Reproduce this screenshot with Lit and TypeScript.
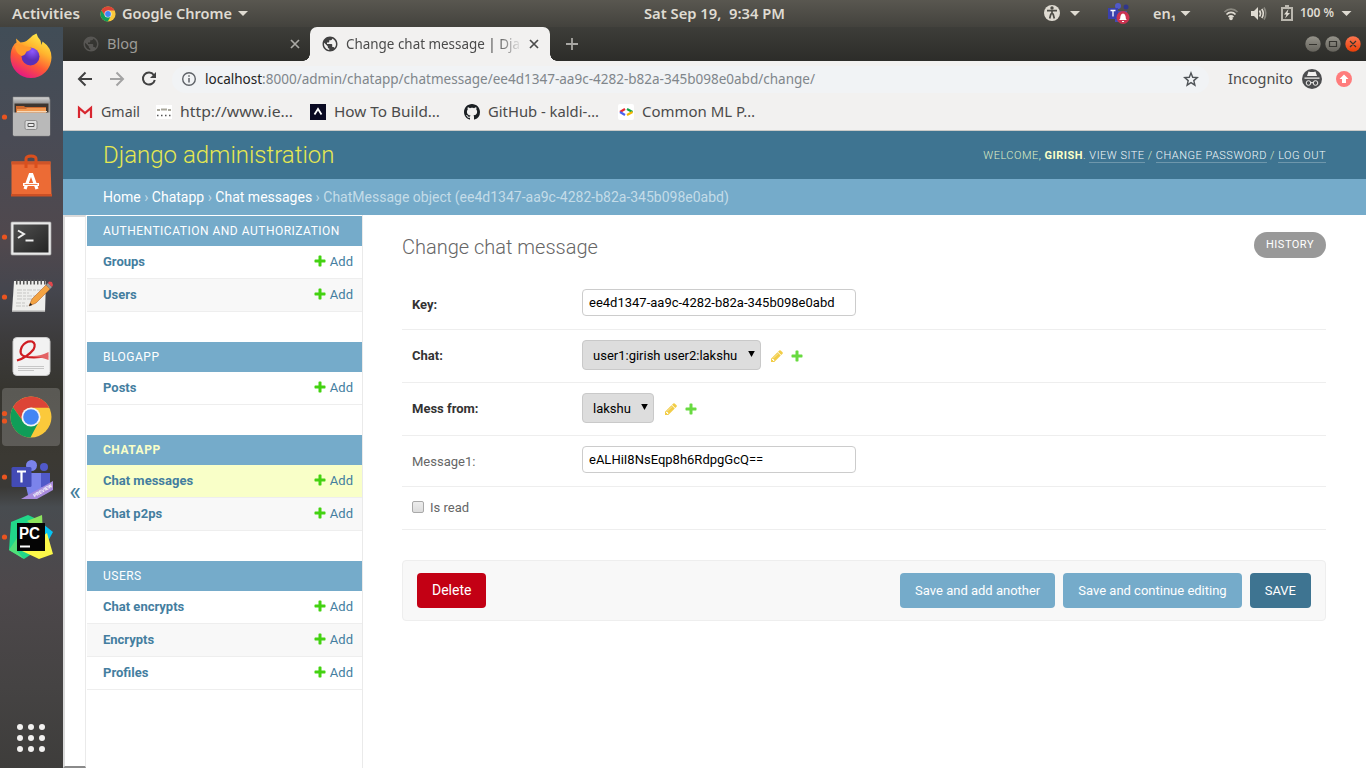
import { LitElement, html, svg, css } from "lit";
import { customElement } from "lit/decorators.js";

const GLOBE =
  "M12 2C6.48 2 2 6.48 2 12s4.48 10 10 10 10-4.48 10-10S17.52 2 12 2zm-1 17.93c-3.95-.49-7-3.85-7-7.93 0-.62.08-1.21.21-1.79L9 15v1c0 1.1.9 2 2 2v1.93zm6.9-2.54c-.26-.81-1-1.39-1.9-1.39h-1v-3c0-.55-.45-1-1-1H8v-2h2c.55 0 1-.45 1-1V7h2c1.1 0 2-.9 2-2v-.41c2.93 1.19 5 4.06 5 7.41 0 2.08-.8 3.97-2.1 5.39z";
const PLUS =
  "M1600 796v192q0 40-28 68t-68 28h-416v416q0 40-28 68t-68 28h-192q-40 0-68-28t-28-68v-416h-416q-40 0-68-28t-28-68v-192q0-40 28-68t68-28h416v-416q0-40 28-68t68-28h192q40 0 68 28t28 68v416h416q40 0 68 28t28 68z";
const PENCIL =
  "M491 1536l91-91-235-235-91 91v107h128v128h107zm523-928q0-22-22-22-10 0-17 7l-542 542q-7 7-7 17 0 22 22 22 10 0 17-7l542-542q7-7 7-17zm-54-192l416 416-832 832h-416v-416zm683 96q0 53-37 90l-166 166-416-416 166-165q36-38 90-38 53 0 91 38l235 234q37 39 37 91z";
const OCTOCAT =
  "M8 0C3.58 0 0 3.58 0 8c0 3.54 2.29 6.53 5.47 7.59.4.07.55-.17.55-.38 0-.19-.01-.82-.01-1.49-2.01.37-2.53-.49-2.69-.94-.09-.23-.48-.94-.82-1.13-.28-.15-.68-.52-.01-.53.63-.01 1.08.58 1.23.82.72 1.21 1.87.87 2.33.66.07-.52.28-.87.51-1.07-1.78-.2-3.64-.89-3.64-3.95 0-.87.31-1.59.82-2.15-.08-.2-.36-1.02.08-2.12 0 0 .67-.21 2.2.82.64-.18 1.32-.27 2-.27s1.36.09 2 .27c1.53-1.04 2.2-.82 2.2-.82.44 1.1.16 1.92.08 2.12.51.56.82 1.27.82 2.15 0 3.07-1.87 3.75-3.65 3.95.29.25.54.73.54 1.48 0 1.07-.01 1.93-.01 2.2 0 .21.15.46.55.38A8.01 8.01 0 0016 8c0-4.42-3.58-8-8-8z";

/** One line of text spread over an exact width. */
const label = (text: string, width: number, cls = "") => html`
  <svg class="label ${cls}" width=${width} height="20">
    <text x="0" y="15" textLength=${width} lengthAdjust="spacingAndGlyphs">${text}</text>
  </svg>`;

const labelStyles = css`
  svg { display: block; flex: none; }
  .label { overflow: visible; font-family: "Noto Sans", "Open Sans", sans-serif; font-size: 14px; fill: #4b4b4b; }
  .label text { white-space: pre; }
`;

const chromeMark = (cx: number, cy: number, r: number) => svg`
  <g transform="translate(${cx} ${cy}) scale(${r / 20})">
    <circle r="20" fill="#fbc93b"/>
    <path d="M-17.6-9.5A20 20 0 0 1 17.9-9L0-9-7.8 4.5z" fill="#dc4437"/>
    <path d="M-17.6-9.5A20 20 0 0 0-.5 20L7.8 4.5-7.8 4.5z" fill="#109d58"/>
    <circle r="9.3" fill="#f4f4f4"/><circle r="7.6" fill="#4285f4"/>
  </g>`;

@customElement("top-bar")
class TopBar extends LitElement {
  static styles = [labelStyles, css`
    :host { display: flex; align-items: center; height: 27px; background: linear-gradient(#595750, #43423d); }
    .label { font-weight: 600; font-size: 13.5px; fill: #dfdbd2; }
    .small { font-size: 12px; }
    .start { display: flex; flex: none; align-items: center; width: 644px; padding-left: 12px; box-sizing: border-box; }
    .app { margin: 0 6px 0 20px; }
    .caret { margin-left: 6px; }
    .tray { margin-left: 258px; }
  `];
  render() {
    const caret = svg`<path d="M0 0h10l-5 5z" fill="#dfdbd2"/>`;
    return html`
      <div class="start">
        ${label("Activities", 68)}
        <svg class="app" width="16" height="16">${chromeMark(8, 8, 7.6)}</svg>
        ${label("Google Chrome", 110)}
        <svg class="caret" width="10" height="6">${caret}</svg>
      </div>
      ${label("Sat Sep 19,  9:34 PM", 141)}
      <svg class="tray" width="110" height="27">
        <circle cx="9" cy="13" r="8" fill="#dfdbd2"/>
        <circle cx="9" cy="8" r="1.700" fill="#4d4c46"/>
        <path d="M4 10.700h10M9 10.500v4M8 13.500L6.700 18.500M10 13.500l1.300 5" stroke="#4d4c46" stroke-width="1.700" fill="none"/>
        <g transform="translate(27 11)">${caret}</g>
        <circle cx="75" cy="6" r="3" fill="#5059c9"/><circle cx="83" cy="7" r="2.500" fill="#30368c"/>
        <path d="M72 11h12v11h-12z" fill="#454bb0"/>
        <path d="M65 8h10v11h-10z" fill="#3a40ad"/>
        <path d="M67.500 10.500h5M70 10.500v6" stroke="#fff" stroke-width="1.300"/>
        <circle cx="80" cy="17.500" r="6.500" fill="#cc3350"/>
        <path d="M76 20q1.500-1 1.500-4 .5-2.500 2.500-2.500t2.500 2.500q0 3 1.500 4zM79 21h2v1h-2z" fill="#fff"/>
      </svg>
      ${label("en₁", 23)}
      <svg width="190" height="27" viewBox="1176 0 190 27">
        <g transform="translate(1180.500 11)">${caret}</g>
        <g fill="none" stroke="#dfdbd2" stroke-width="1.700">
          <path d="M1224.500 12a9 9 0 0 1 13 0" opacity=".4"/><path d="M1226.500 14.500a6 6 0 0 1 9 0M1228.500 17a4 4 0 0 1 5 0"/>
          <path d="M1259.500 10.500q2 3 0 6M1261.800 9q3 4.500 0 9"/><path d="M1264 7.500q3.500 6 0 12" opacity=".4"/>
          <path d="M1282 8h10v12h-10zM1285 6h4" opacity=".75" stroke-width="2"/>
        </g>
        <circle cx="1231" cy="18.500" r="1.800" fill="#dfdbd2"/>
        <path d="M1251 11h3l4-4v13l-4-4h-3zM1288.500 9l-4.500 5.500h2.500l-1.500 4 5-5.500h-2.500z" fill="#dfdbd2"/>
        <text x="1300" y="17" class="label small" textLength="34">100 %</text>
        <g transform="translate(1341.500 11)">${caret}</g>
      </svg>`;
  }
}

@customElement("app-dock")
class AppDock extends LitElement {
  static styles = [labelStyles, css`
    :host {
      display: flex; flex-direction: column; width: 63px; flex: none;
      background: linear-gradient(#414d57 0, #494b55 110px, #50484d 215px, #45464e 262px, #3d3c3d 310px, #36352f 365px, #3b3933 430px, #3a3936 460px, #484c50 480px, #4d484b 560px, #454343 660px, #3e3d3b 741px);
    }
    .spacer { flex: 1; }
    .mono { font-family: "Liberation Sans", sans-serif; font-weight: 700; }
  `];
  tile(content: unknown, dots = 0) {
    return html`<svg width="63" height="60">
      ${dots === 1 ? svg`<circle cx="4.500" cy="30" r="2.600" fill="#e95420"/>` : ""}
      ${content}
      ${dots === 2 ? svg`<circle cx="4.500" cy="26.500" r="2.600" fill="#e95420"/><circle cx="4.500" cy="34" r="2.600" fill="#e95420"/>` : ""}
    </svg>`;
  }
  render() {
    return html`
      ${this.tile(svg`
        <defs>
          <linearGradient id="fx" x1=".8" y1="0" x2=".3" y2="1"><stop offset="0" stop-color="#fff44f"/><stop offset=".35" stop-color="#ffb52e"/><stop offset=".65" stop-color="#ff5a35"/><stop offset="1" stop-color="#e31587"/></linearGradient>
          <radialGradient id="fp" cx=".6" cy=".2"><stop offset="0" stop-color="#9059ff"/><stop offset="1" stop-color="#5b2fb8"/></radialGradient>
        </defs>
        <path d="M10.500 30q0-8 4-13l2-1.500-.5-4 4.500 4 3.500-.5q3-1 6-4 2-3 6.500-4.500 1 4 4 7l1 4.500 1-3.500q9 6 9 16a20.500 20.500 0 0 1-41 0z" fill="url(#fx)"/>
        <circle cx="30.500" cy="29.500" r="9" fill="url(#fp)"/>
        <path d="M15 19q6-3 10 .5 4-.5 6.500 1.500-1 2.500-5 3.500-1.500 4-5 4.500-6-3-6.500-10z" fill="#ff9a2b"/>`)}
      ${this.tile(svg`
        <defs><linearGradient id="cab" x2="0" y2="1"><stop offset="0" stop-color="#d6d6d6"/><stop offset=".15" stop-color="#9b9b9b"/><stop offset="1" stop-color="#c3c3c3"/></linearGradient></defs>
        <path d="M13 10h36l1 3v35q0 1-1.500 1h-34q-1.500 0-1.500-1V13z" fill="url(#cab)" stroke="#858585" stroke-width=".6"/>
        <path d="M14.500 16.500h34V27h-34z" fill="#3e3630"/>
        <path d="M16 19h8l1 1h21v6H16z" fill="#cf6b30"/><path d="M17 22h9l1-1h19v5H17z" fill="#f19a52"/><path d="M17 24.500h30" stroke="#f7d7b5"/>
        <path d="M13 25.500h37V48H13z" fill="#b9b9b9"/>
        <rect x="25" y="33.500" width="12" height="9" rx="1.500" fill="#ddd" stroke="#8b8b8b"/><path d="M28 36.500h6v3h-6z" fill="#eee" stroke="#555"/>`, 1)}
      ${this.tile(svg`
        <path d="M11.500 14.500h39L51.500 49h-40z" fill="#ec6b35"/><path d="M11.500 14.500h39v3h-39z" fill="#cf5428"/><path d="M11 47h41v2.500H11z" fill="#cb5025"/>
        <path d="M26 21v-9q0-3 5-3t5 3v9" fill="none" stroke="#d94f1d" stroke-width="3"/>
        <path d="M25 42l5.200-14.500h1.600L37 42" fill="none" stroke="#fff" stroke-width="3.200"/><path d="M23 37.500h16" stroke="#fff" stroke-width="3"/><path d="M24.500 37.500h13" stroke="#f0824f"/>`)}
      ${this.tile(svg`
        <defs><linearGradient id="tm" x2="1" y2="1"><stop offset="0" stop-color="#505050"/><stop offset="1" stop-color="#242424"/></linearGradient></defs>
        <rect x="11" y="15" width="40" height="33" rx="1" fill="#e9e9e9" stroke="#aaa" stroke-width=".7"/><path d="M13.500 17.500h35v28h-35z" fill="url(#tm)"/>
        <path d="M18 23.500l6 3.500-6 4" fill="none" stroke="#eee" stroke-width="2"/><path d="M25.500 33.500h8" stroke="#eee" stroke-width="2"/>`, 1)}
      ${this.tile(svg`
        <path d="M14 14h32l-1 31H12z" fill="#eeeeec"/><path d="M12 43.500h33v1.500H12z" fill="#aaa"/>
        <path d="M16 15h30" stroke="#555" stroke-width="5" stroke-dasharray="1.500 2"/>
        <path d="M17 23h25M17 26h12M17 29h22M17 32h20M16 36h10M16 39h12" stroke="#c5c5c3" stroke-dasharray="5 1 3 1"/>
        <path d="M29 39l3-7 14-14 4 4-14 14z" fill="#f3a342" stroke="#b4672c" stroke-width=".6"/><path d="M29 39l1.300-3 2 2z" fill="#222"/><path d="M46 18l2-2 4 4-2 2z" fill="#999"/><path d="M48 16l1-1.500 3 .5 1 3-1 2z" fill="#e2464b"/>`, 1)}
      ${this.tile(svg`
        <rect x="13" y="10.500" width="37" height="38" rx="4" fill="#f2f2f2" stroke="#c9c9c9"/>
        <path d="M17 33.500q10-3 16.500-11 3-6-1.500-8-6-1-10 5-4 8 3 10 9 2 23-.5" fill="none" stroke="#cf1d22" stroke-width="2.200"/>
        <path d="M33 29q8 0 15.500-4v8q-7-3-15.500-3z" fill="#e36365"/><path d="M18 39.500h26M18 41.500h26M18 43.500h16" stroke="#bbb" stroke-width=".8"/>`)}
      ${this.tile(svg`<rect x="2" y="1" width="58" height="58" rx="4" fill="#fff" opacity=".18"/>${chromeMark(31, 30, 20.5)}`, 2)}
      ${this.tile(svg`
        <circle cx="31.500" cy="18.500" r="5.500" fill="#7b83eb"/><circle cx="44" cy="20" r="4" fill="#5059c9"/>
        <path d="M23 26h27v13q0 8-8 9H28z" fill="#7b83eb"/><path d="M41 26h9v14h-9z" fill="#5059c9"/>
        <rect x="11.500" y="20" width="20" height="20" rx="1.500" fill="#434bb5"/><path d="M17 24.500h9M21.500 24.500v11" stroke="#fff" stroke-width="2.200"/>
        <path d="M21 52l32-18v9l-16 9z" fill="#a78bdc"/><text x="0" y="0" transform="translate(34.500 50.500) rotate(-31)" fill="#fff" font-size="5" class="mono" textLength="21" lengthAdjust="spacingAndGlyphs">PREVIEW</text>`, 1)}
      ${this.tile(svg`
        <path d="M9 43l2-28 17-7 13 6v27l-17 11z" fill="#21d789"/><path d="M27 14l15-6 1 18z" fill="#8de45d"/><path d="M43 17l10 8-6 11z" fill="#07c3f2"/>
        <path d="M22 44l25-18 6 21-14 5z" fill="#fcf84a"/><path d="M9 43l8-12v13l7 8z" fill="#51e078"/>
        <path d="M17 16h28v28H17z" fill="#050505"/><text x="19" y="31.500" class="mono" font-size="16" fill="#fff" textLength="21" lengthAdjust="spacingAndGlyphs">PC</text><path d="M20 39.500h10" stroke="#fff" stroke-width="2"/>`, 1)}
      <div class="spacer"></div>
      <svg width="63" height="60">
        ${[0, 1, 2].map((r) => [0, 1, 2].map((c) => svg`<circle cx=${20 + c * 11} cy=${19 + r * 11} r="3" fill="#f2f1f0"/>`))}
      </svg>`;
  }
}

@customElement("browser-chrome")
class BrowserChrome extends LitElement {
  static styles = [labelStyles, css`
    :host { display: block; background: #f2f1f0; height: 103px; border-bottom: 1px solid #c9cac8; }
    .tabs { display: flex; align-items: center; height: 34px; background: linear-gradient(#3d3d39, #2c2c29); }
    .tab { display: flex; align-items: center; width: 247px; height: 34px; padding-left: 20px; box-sizing: border-box; gap: 8px; }
    .tab .label { fill: #9d9c98; }
    .tab.on { position: relative; width: 240px; padding-left: 12px; background: #f2f1f0; border-radius: 7px 7px 0 0; }
    .tab.on::before, .tab.on::after { content: ""; position: absolute; bottom: 0; width: 7px; height: 7px; }
    .tab.on::before { left: -7px; background: radial-gradient(circle at 0 0, transparent 6.5px, #f2f1f0 7px); }
    .tab.on::after { right: -7px; background: radial-gradient(circle at 100% 0, transparent 6.5px, #f2f1f0 7px); }
    .tab.on .label { fill: #4b4b4b; }
    .title { width: 174px; -webkit-mask-image: linear-gradient(90deg, #000 150px, transparent 176px); }
    .grow { flex: 1; }
    .gap { width: 135px; }
    .tools { display: flex; align-items: center; height: 36px; }
    .omni { display: flex; align-items: center; gap: 8px; width: 1038px; height: 27px; margin-left: 8px; padding-left: 9px; box-sizing: border-box; border-radius: 14px; background: #f1f3f5; }
    .url .host { fill: #222; }
    .url { fill: #80868b; }
    .inc { margin-left: 19px; }
    .marks { display: flex; align-items: center; height: 30px; padding-left: 14px; }
    .mark { display: flex; align-items: center; gap: 8px; }
  `];
  render() {
    const x = (c: string) => html`<svg width="12" height="12"><path d="M2 2l8 8M10 2l-8 8" stroke=${c} stroke-width="1.700"/></svg>`;
    const globe = (c: string) => html`<svg width="16" height="16" viewBox="1.300 1.300 21.400 21.400"><path d=${GLOBE} fill=${c}/></svg>`;
    const mark = (icon: unknown, text: string, width: number, slot: number) => html`
      <div class="mark" style="width:${slot}px"><svg width="16" height="16">${icon}</svg>${label(text, width)}</div>`;
    return html`
      <div class="tabs">
        <div class="tab">${globe("#575653")}${label("Blog", 31)}<div class="gap"></div>${x("#aaa9a5")}</div>
        <div class="tab on">${globe("#414141")}<div class="title">${label("Change chat message | Dja", 174)}</div>${x("#4b4b4b")}</div>
        <svg width="44" height="34"><path d="M16 17h12M22 11v12" stroke="#a9a8a4" stroke-width="1.800"/></svg>
        <div class="grow"></div>
        <svg width="62" height="34">
          <defs><linearGradient id="gb" x2="0" y2="1"><stop offset="0" stop-color="#95938a"/><stop offset="1" stop-color="#66645d"/></linearGradient>
          <linearGradient id="rb" x2="0" y2="1"><stop offset="0" stop-color="#fc7650"/><stop offset="1" stop-color="#ea3f08"/></linearGradient></defs>
          <circle cx="9" cy="17" r="7.700" fill="url(#gb)"/><circle cx="29" cy="17" r="7.700" fill="url(#gb)"/><circle cx="49" cy="17" r="7.700" fill="url(#rb)"/>
          <path d="M5 17.500h8M25.500 14.500h7v5h-7zM46 14l6 6M52 14l-6 6" fill="none" stroke="#35342f" stroke-width="1.200"/>
        </svg>
      </div>
      <div class="tools">
        <svg width="101" height="36" fill="none" stroke="#414141" stroke-width="2">
          <path d="M29 18H16.500M22.500 11.500L16 18l6.500 6.500"/>
          <path d="M47 18h12.500M53.500 11.500L60 18l-6.500 6.500" stroke="#a3a3a3"/>
          <path d="M90.800 14a6 6 0 1 0 1 5"/><path d="M93 11v6h-6z" fill="#414141" stroke="none"/>
        </svg>
        <div class="omni">
          <svg width="16" height="16"><circle cx="8" cy="8" r="6.300" fill="none" stroke="#5f6368" stroke-width="1.400"/><path d="M8 7v4.500M8 4.300v1.500" stroke="#5f6368" stroke-width="1.500"/></svg>
          <svg class="label url" width="970" height="20"><text x="0" y="14.500" textLength="610" lengthAdjust="spacingAndGlyphs"><tspan class="host">localhost</tspan>:8000/admin/chatapp/chatmessage/ee4d1347-aa9c-4282-b82a-345b098e0abd/change/</text></svg>
          <svg width="16" height="16"><path d="M8 2l1.700 4.300 4.600.3-3.500 3 1.100 4.500L8 11.600l-3.900 2.500 1.100-4.500-3.500-3 4.600-.3z" fill="none" stroke="#4f5357" stroke-width="1.400"/></svg>
        </div>
        <div class="inc">${label("Incognito", 65)}</div>
        <svg width="73" height="36">
          <circle cx="19" cy="18" r="10" fill="#4c4d4f"/>
          <path d="M11.500 16.500h15v1.200h-15zM14 15l1.500-4.500q3.500 1 7 0L24 15z" fill="#f2f1f0"/>
          <path d="M17.500 22q1.500-1 3 0" stroke="#f2f1f0" fill="none"/><circle cx="15.500" cy="22" r="2.300" fill="none" stroke="#f2f1f0"/><circle cx="22.500" cy="22" r="2.300" fill="none" stroke="#f2f1f0"/>
          <circle cx="51" cy="18" r="8" fill="#ff7c7c"/><path d="M51 13.500l4.500 4.500h-2.500v4h-4v-4h-2.500z" fill="#fff"/>
        </svg>
      </div>
      <div class="marks">
        ${mark(svg`<path d="M1 3h14v11H1z" fill="#f3eeee"/><path d="M2 14V3.800l6 5.200 6-5.200V14" fill="none" stroke="#d8262f" stroke-width="2.200"/>`, "Gmail", 39, 79)}
        ${mark(svg`<path d="M0 1h16v14H0z" fill="#fff"/><path d="M1 6h3M5 5.500h6M12 6h3" stroke="#a9a79b" stroke-width="2"/><path d="M1 11.500h15" stroke="#555" stroke-width="1.500" stroke-dasharray="1.500 2.500"/>`, "http://www.ie…", 113, 154)}
        ${mark(svg`<path d="M0 0h16v16H0z" fill="#0a0a23"/><path d="M4.500 10.500L8 5l3.500 5.500" fill="none" stroke="#fff" stroke-width="1.800"/>`, "How To Build…", 106, 154)}
        ${mark(svg`<path d=${OCTOCAT} fill="#1b1f23"/>`, "GitHub - kaldi-…", 111, 154)}
        ${mark(svg`<rect width="16" height="16" rx="2" fill="#fff"/><g stroke-width="2.200"><path d="M7 5L2 8" stroke="#ea2a30"/><path d="M2 8l5 3" stroke="#4b62f0"/><path d="M9 5l5.500 3" stroke="#17a34a"/><path d="M14.500 8L9 11" stroke="#f5b800"/></g>`, "Common ML P…", 113, 154)}
      </div>`;
  }
}

type Section = { name: string; current?: boolean; models: string[] };
const SECTIONS: Section[] = [
  { name: "Authentication and Authorization", models: ["Groups", "Users"] },
  { name: "Blogapp", models: ["Posts"] },
  { name: "Chatapp", current: true, models: ["Chat messages", "Chat p2ps"] },
  { name: "Users", models: ["Chat encrypts", "Encrypts", "Profiles"] },
];

@customElement("admin-page")
class AdminPage extends LitElement {
  static styles = css`
    :host { display: flex; flex-direction: column; flex: 1; min-height: 0; background: #fff; color: #333; font: 13px/17px Roboto, sans-serif; }
    svg { display: block; flex: none; }
    a { color: inherit; text-decoration: none; }
    .header { display: flex; align-items: center; justify-content: space-between; height: 48px; padding: 0 40px; background: #3e7491; color: #ffc; }
    .brand { font-size: 24px; line-height: 48px; font-weight: 300; color: #e6e850; }
    .user { font-size: 11px; font-weight: 300; letter-spacing: .5px; text-transform: uppercase; color: #dfeec6; }
    .user b { font-weight: 700; color: #fbffc8; }
    .user a { color: #f4fafc; border-bottom: 1px solid rgba(255, 255, 255, .25); }
    .crumbs { height: 36px; padding: 0 40px; background: #75abca; color: #c4dce8; font-size: 14px; line-height: 36px; }
    .crumbs a { color: #fff; }
    .main { display: flex; flex: 1; min-height: 0; }
    .toggle { display: flex; align-items: center; justify-content: center; width: 23px; box-sizing: border-box; border: solid #dadada; border-width: 2px 1px 2px 2px; border-right-color: #eaeaea; border-bottom-color: #8a8a8a; color: #447e9b; font-size: 25px; }
    .nav { width: 275px; padding: 1px 0 0 1px; border-right: 1px solid #eaeaea; overflow: hidden; }
    .module { margin-bottom: 30px; }
    .caption { height: 30px; padding-left: 16px; background: #75abca; color: #fff; font-size: 12px; line-height: 30px; letter-spacing: .5px; text-transform: uppercase; }
    .caption.current { color: #f9ffc8; font-weight: 700; }
    .model { display: flex; align-items: center; box-sizing: border-box; height: 33px; padding: 0 9px 2px 16px; border-bottom: 1px solid #eee; color: #447e9f; font-weight: 700; }
    .model:nth-child(odd) { background: #f8f8f8; }
    .model.current { background: #f9ffc8; }
    .model span { flex: 1; }
    .model a { display: flex; gap: 3px; align-items: center; font-weight: 400; }
    .content { flex: 1; padding: 17px 40px 0 39px; }
    .head { display: flex; justify-content: space-between; height: 47px; }
    h1 { margin: 0; font-size: 20px; line-height: 30px; font-weight: 300; color: #666; }
    .history { box-sizing: border-box; height: 26px; padding: 0 12px; border-radius: 15px; background: #999; color: #fff; font-size: 11px; line-height: 25px; letter-spacing: .5px; text-transform: uppercase; }
    .row { display: flex; box-sizing: border-box; height: 53px; padding: 10px; border-bottom: 1px solid #eee; }
    .row.text { height: 51px; }
    .row.check { height: 43px; align-items: center; gap: 6px; padding: 8px 10px 10px; color: #666; }
    .row label { width: 170px; padding-top: 7px; font-weight: 700; }
    .row.opt label { font-weight: 400; color: #666; }
    .row input { box-sizing: border-box; width: 274px; height: 27px; padding: 0 6px; border: 1px solid #ccc; border-radius: 4px; background: #fff; color: #000; font: 13px Roboto, sans-serif; }
    .pick { display: flex; align-items: center; box-sizing: border-box; height: 30px; margin-right: 9.5px; padding: 0 5px 0 10px; gap: 10.6px; border: 1px solid #c9c9c9; border-radius: 4px; background: #ddd; color: #000; }
    .pick svg { margin-top: -2px; }
    .acts { display: flex; gap: 6px; padding-top: 9px; opacity: .8; }
    .box { width: 12px; height: 12px; margin-top: -1px; box-sizing: border-box; border: 1px solid #a9a9a9; border-radius: 2px; background: linear-gradient(#ededed, #dcdcdc); }
    .submit { display: flex; gap: 8px; box-sizing: border-box; height: 61px; margin-top: 30px; padding: 12px 14px; border: 1px solid #eee; border-radius: 4px; background: #f8f8f8; }
    .btn { height: 35px; padding: 0 15px; border-radius: 4px; background: #75abca; color: #fff; line-height: 35px; }
    .btn.delete { margin-right: auto; background: #c30014; font-size: 14px; }
    .btn.save { background: #3e7491; }
  `;
  icon(d: string, color: string) {
    return html`<svg width="14" height="14" viewBox="0 0 1792 1792"><path d=${d} fill=${color}/></svg>`;
  }
  select(value: string) {
    return html`
      <div class="pick">${value}<svg width="7" height="6"><path d="M.2 0h6.600L3.500 6z" fill="#000"/></svg></div>
      <div class="acts">${this.icon(PENCIL, "#efc11a")}${this.icon(PLUS, "#43d211")}</div>`;
  }
  render() {
    return html`
      <div class="header">
        <div class="brand">Django administration</div>
        <div class="user">Welcome, <b>Girish</b>. <a>View site</a> / <a>Change password</a> / <a>Log out</a></div>
      </div>
      <div class="crumbs"><a>Home</a> › <a>Chatapp</a> › <a>Chat messages</a> › ChatMessage object (ee4d1347-aa9c-4282-b82a-345b098e0abd)</div>
      <div class="main">
        <div class="toggle">«</div>
        <div class="nav">
          ${SECTIONS.map((s) => html`
            <div class="module">
              <div class="caption ${s.current ? "current" : ""}">${s.name}</div>
              ${s.models.map((m) => html`
                <div class="model ${m === "Chat messages" ? "current" : ""}"><span>${m}</span><a>${this.icon(PLUS, "#43d211")}Add</a></div>`)}
            </div>`)}
        </div>
        <div class="content">
          <div class="head"><h1>Change chat message</h1><div class="history">History</div></div>
          <div class="form">
            <div class="row text"><label>Key:</label><input value="ee4d1347-aa9c-4282-b82a-345b098e0abd"></div>
            <div class="row"><label>Chat:</label>${this.select("user1:girish user2:lakshu")}</div>
            <div class="row"><label>Mess from:</label>${this.select("lakshu")}</div>
            <div class="row text opt"><label>Message1:</label><input value="eALHiI8NsEqp8h6RdpgGcQ=="></div>
            <div class="row check"><div class="box"></div><span>Is read</span></div>
          </div>
          <div class="submit">
            <div class="btn delete">Delete</div>
            <div class="btn">Save and add another</div>
            <div class="btn">Save and continue editing</div>
            <div class="btn save">SAVE</div>
          </div>
        </div>
      </div>`;
  }
}

@customElement("app-root")
class AppRoot extends LitElement {
  static styles = css`
    :host { display: flex; flex-direction: column; width: 1366px; height: 768px; overflow: hidden; }
    .desk { display: flex; flex: 1; min-height: 0; }
    .window { display: flex; flex-direction: column; flex: 1; min-width: 0; }
  `;
  render() {
    return html`
      <top-bar></top-bar>
      <div class="desk">
        <app-dock></app-dock>
        <div class="window"><browser-chrome></browser-chrome><admin-page></admin-page></div>
      </div>`;
  }
}
